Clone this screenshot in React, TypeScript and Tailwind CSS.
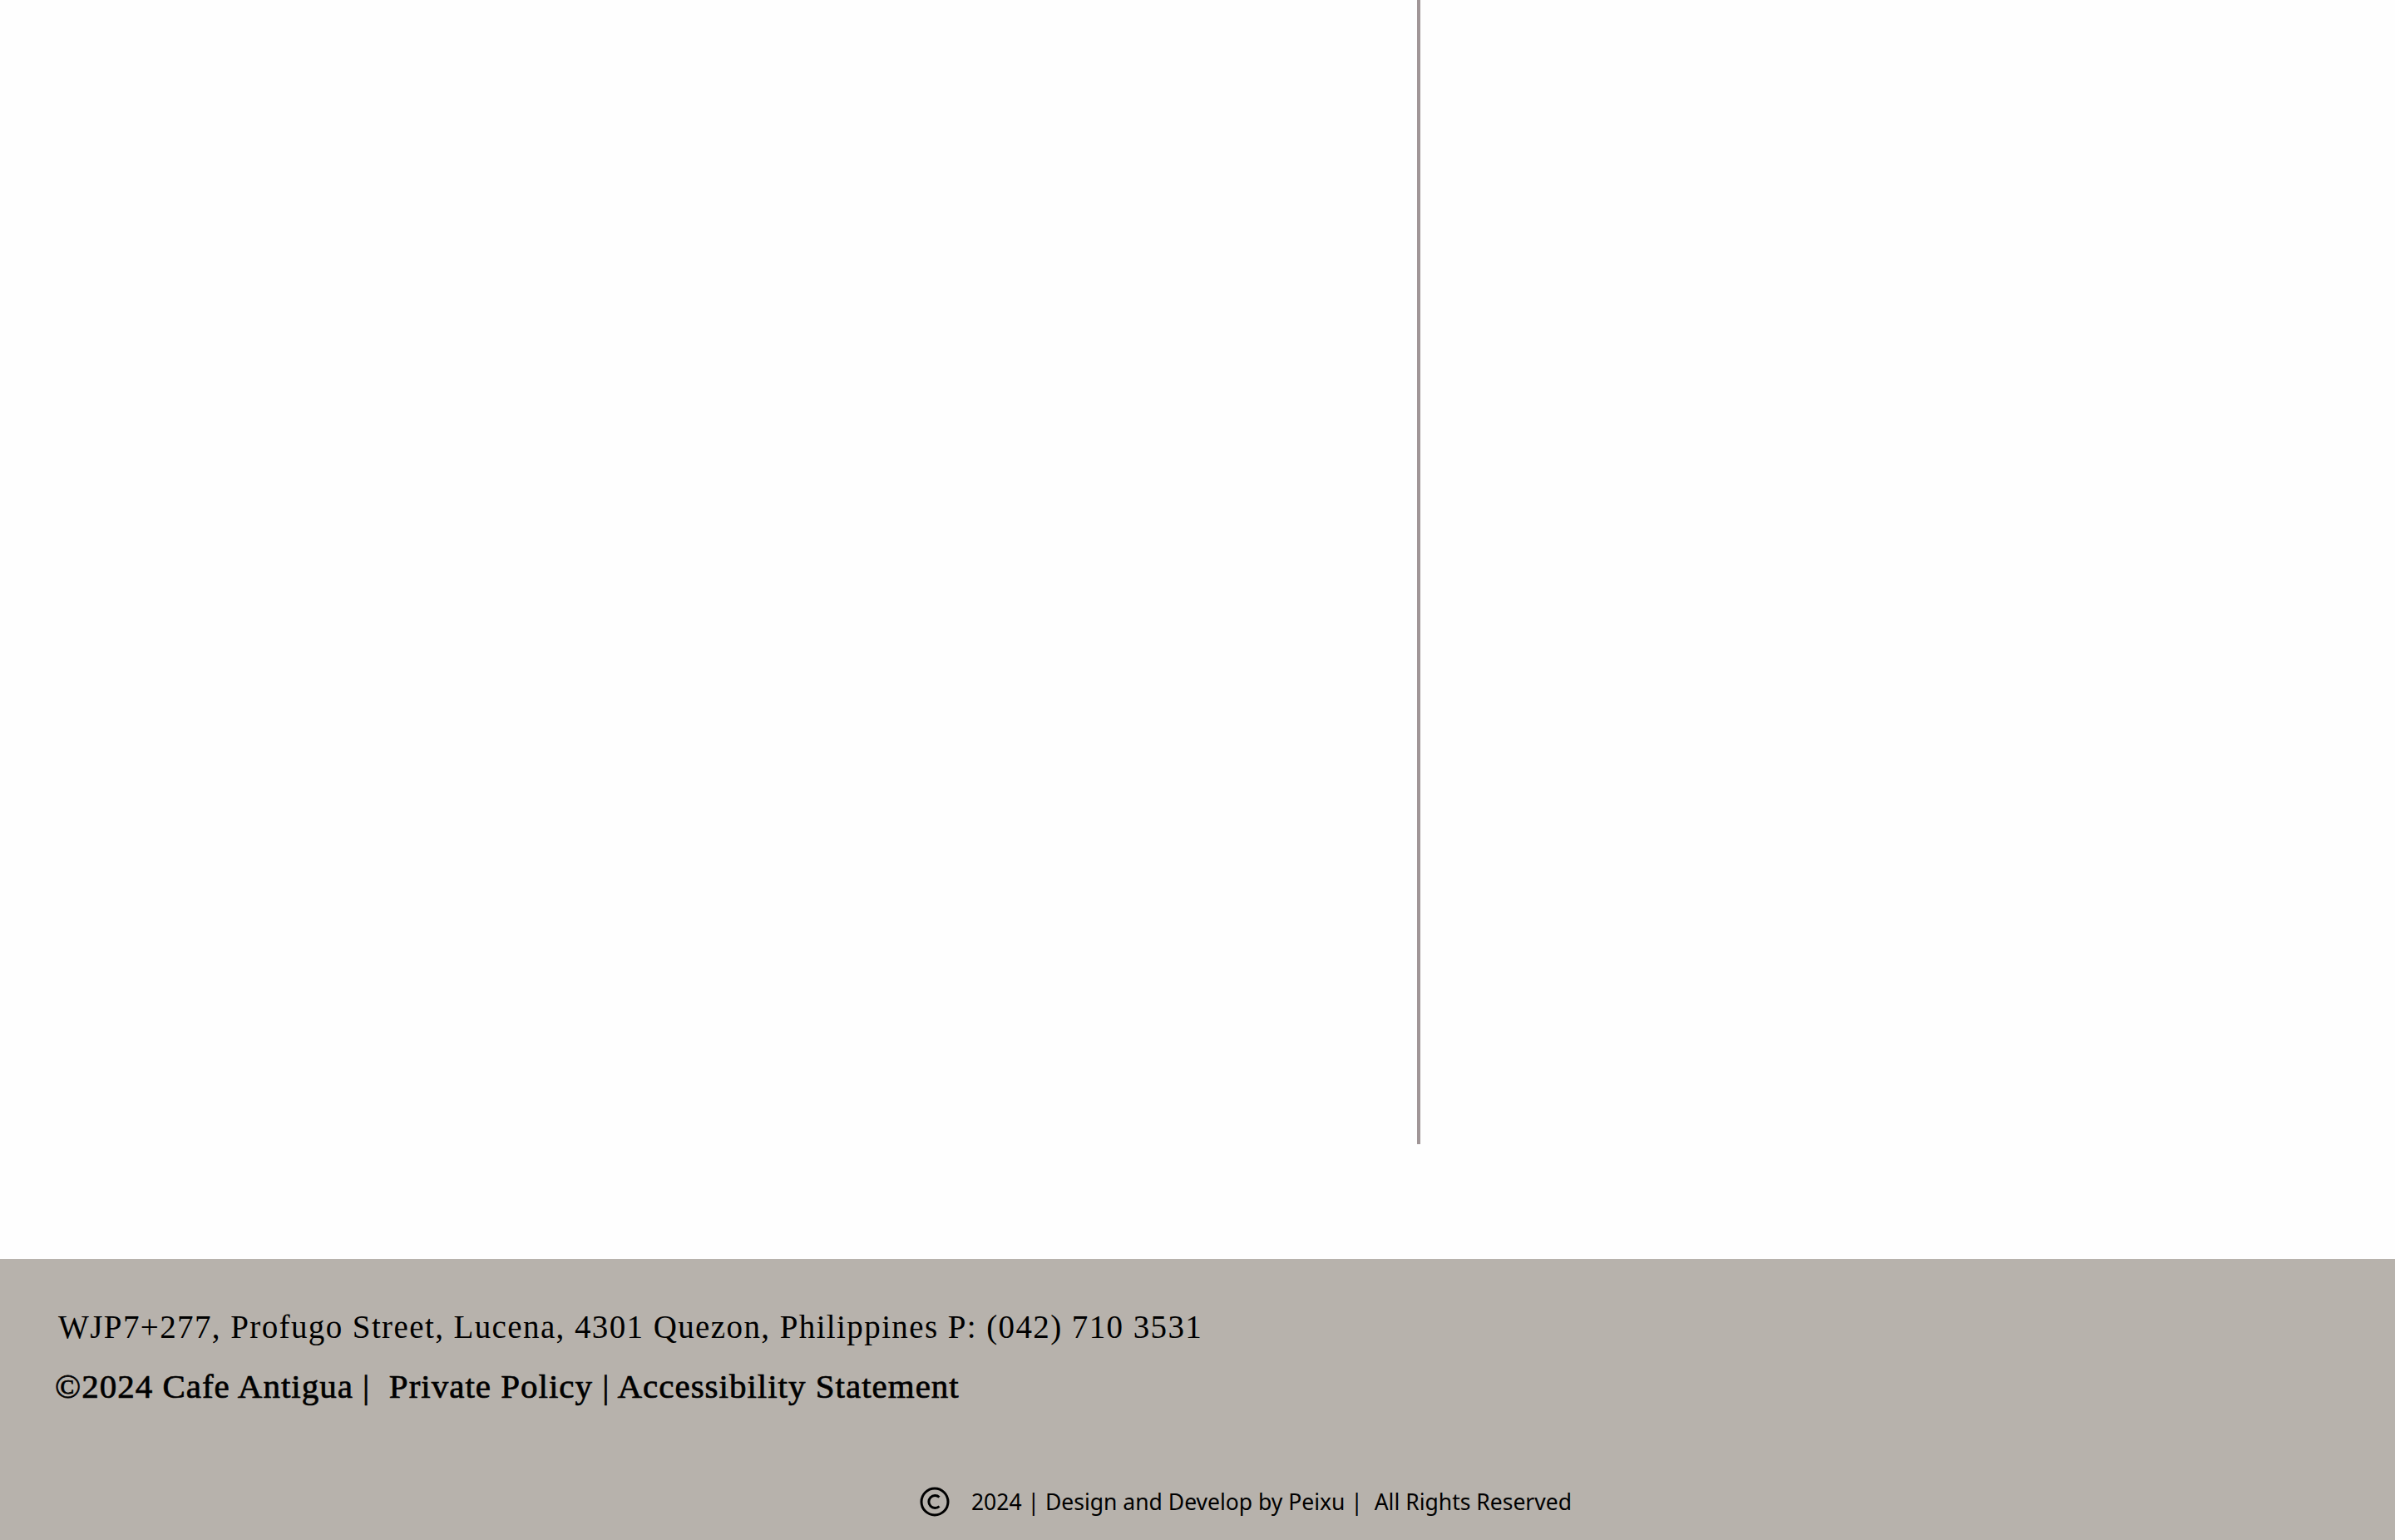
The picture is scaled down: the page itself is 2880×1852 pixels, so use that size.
import React from "react";

export default function App() {
  return (
    <div className="w-[2880px] h-[1852px] bg-white flex flex-col overflow-hidden">
      <div className="h-[1514px] flex bg-[#fefefe]">
        <div className="ml-[1704px] w-[4px] h-[1376px] bg-[#a09697]" />
      </div>
      <footer className="h-[338px] bg-[#b7b2ac] text-black flex flex-col">
        <div
          className="pt-[62px] pl-[70px] flex flex-col"
          style={{ fontFamily: '"Liberation Serif", serif' }}
        >
          <p className="text-[39px] leading-[40px] tracking-[1.4px] whitespace-pre">
            WJP7+277, Profugo Street, Lucena, 4301 Quezon, Philippines P: (042) 710 3531
          </p>
          <p className="mt-[30px] -ml-[4px] text-[41px] leading-[42px] tracking-[1px] whitespace-pre [-webkit-text-stroke:0.7px_black]">
            ©2024 Cafe Antigua |  Private Policy | Accessibility Statement
          </p>
        </div>
        <div
          className="mt-auto mb-[28px] flex items-center justify-center pl-[116px]"
          style={{ fontFamily: '"Noto Sans", sans-serif' }}
        >
          <svg width="36" height="36" viewBox="0 0 36 36" className="mr-[26px]">
            <circle cx="18" cy="18" r="16" fill="none" stroke="#000" strokeWidth="3" />
            <path d="M23.5 12.5 A7.5 7.5 0 1 0 23.5 23.5" fill="none" stroke="#000" strokeWidth="3" />
          </svg>
          <span className="text-[26.5px] leading-[36px] whitespace-pre">
            2024 | Design and Develop by Peixu |  All Rights Reserved
          </span>
        </div>
      </footer>
    </div>
  );
}
